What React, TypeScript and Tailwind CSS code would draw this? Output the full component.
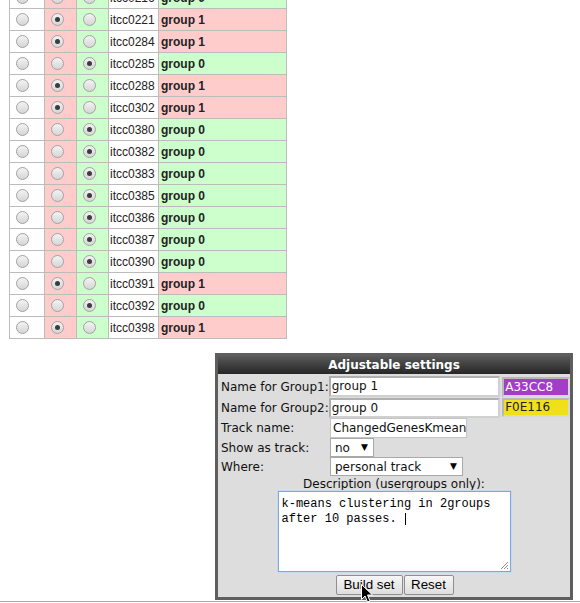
import React from "react";

type Row = { name: string; g: 0 | 1 };

const rows: Row[] = [
  { name: "itcc0216", g: 0 },
  { name: "itcc0221", g: 1 },
  { name: "itcc0284", g: 1 },
  { name: "itcc0285", g: 0 },
  { name: "itcc0288", g: 1 },
  { name: "itcc0302", g: 1 },
  { name: "itcc0380", g: 0 },
  { name: "itcc0382", g: 0 },
  { name: "itcc0383", g: 0 },
  { name: "itcc0385", g: 0 },
  { name: "itcc0386", g: 0 },
  { name: "itcc0387", g: 0 },
  { name: "itcc0390", g: 0 },
  { name: "itcc0391", g: 1 },
  { name: "itcc0392", g: 0 },
  { name: "itcc0398", g: 1 },
];

function Radio({ checked }: { checked?: boolean }) {
  return (
    <span className="flex w-[13px] h-[13px] rounded-full border border-[#a2a2a2] bg-linear-to-b from-[#f3f3f3] to-[#d6d6d6] items-center justify-center">
      {checked && <span className="block w-[5px] h-[5px] rounded-full bg-[#3c3c3c]" />}
    </span>
  );
}

const sans = "font-['DejaVu_Sans',Verdana,sans-serif]";
const arial = "font-['Liberation_Sans',Arial,sans-serif]";

export default function App() {
  return (
    <div className="relative w-[580px] h-[603px] overflow-hidden bg-white text-[#222]">
      <div className="ml-[9px] mt-[-14px]">
        <table className={`border-collapse ${arial} text-[12px]`}>
          <tbody>
            {rows.map((r) => (
              <tr key={r.name} className="h-[22px]">
                <td className="w-[35px] p-0 border border-[#bcbcbc] bg-white">
                  <div className="pl-[6px]"><Radio /></div>
                </td>
                <td className="w-[32px] p-0 border border-[#bcbcbc] bg-[#ffcccc]">
                  <div className="pl-[6px]"><Radio checked={r.g === 1} /></div>
                </td>
                <td className="w-[32px] p-0 border border-[#bcbcbc] bg-[#ccffcc]">
                  <div className="pl-[6px]"><Radio checked={r.g === 0} /></div>
                </td>
                <td className="w-[50px] p-0 pl-[1px] border border-[#bcbcbc] bg-white whitespace-nowrap">
                  {r.name}
                </td>
                <td
                  className={`w-[128px] p-0 pl-[2px] border border-[#bcbcbc] font-bold ${
                    r.g === 1 ? "bg-[#ffcccc]" : "bg-[#ccffcc]"
                  }`}
                >
                  group {r.g}
                </td>
              </tr>
            ))}
          </tbody>
        </table>
      </div>

      <div className="flex justify-end pr-[7px] mt-[14px]">
        <div className={`w-[358px] border-[3px] border-[#5e5e5e] bg-[#dddddd] ${sans} text-[12px] text-[#111]`}>
          <div className="h-[18px] bg-linear-to-b from-[#5a5a5a] to-[#262626] text-white font-bold text-center leading-[18px]">
            Adjustable settings
          </div>
          <div className="flex flex-col pt-[2px]">
            <div className="flex items-center h-[21px]">
              <div className="w-[111px] pl-[3px] whitespace-nowrap">Name for Group1:</div>
              <div className="w-[172px] h-[21px] bg-white border-2 border-t-[#b0b0b0] border-l-[#b0b0b0] border-b-[#d0d0d0] border-r-[#d0d0d0] pl-[1px] leading-[17px]">
                group 1
              </div>
              <div className="ml-[2px] w-[68px] h-[20px] bg-[#a33cc8] border-2 border-t-[#b8b8b8] border-l-[#b8b8b8] border-b-[#d8d8d8] border-r-[#d8d8d8] text-white pl-[1px] leading-[16px]">
                A33CC8
              </div>
            </div>
            <div className="flex items-center h-[21px]">
              <div className="w-[111px] pl-[3px] whitespace-nowrap">Name for Group2:</div>
              <div className="w-[172px] h-[20px] bg-white border-2 border-t-[#b0b0b0] border-l-[#b0b0b0] border-b-[#d0d0d0] border-r-[#d0d0d0] pl-[1px] leading-[16px]">
                group 0
              </div>
              <div className="ml-[2px] w-[68px] h-[19px] bg-[#f0e116] border-2 border-t-[#b8b8b8] border-l-[#b8b8b8] border-b-[#d8d8d8] border-r-[#d8d8d8] text-[#222] pl-[1px] leading-[15px]">
                F0E116
              </div>
            </div>
            <div className="flex items-center h-[20px]">
              <div className="w-[112px] pl-[3px] whitespace-nowrap">Track name:</div>
              <div className="w-[137px] h-[20px] bg-white border border-[#c4c4c4] pl-[2px] leading-[18px] overflow-hidden whitespace-nowrap">
                ChangedGenesKmeans
              </div>
            </div>
            <div className="flex items-center h-[19px]">
              <div className="w-[112px] pl-[3px] whitespace-nowrap">Show as track:</div>
              <div className="w-[44px] h-[19px] bg-white border border-[#a8a8a8] flex items-center pl-[4px] pr-[5px] justify-between">
                <span>no</span>
                <span className="text-[9px] text-black">▼</span>
              </div>
            </div>
            <div className="flex items-center h-[19px]">
              <div className="w-[112px] pl-[3px] whitespace-nowrap">Where:</div>
              <div className="w-[133px] h-[19px] bg-white border border-[#a8a8a8] flex items-center pl-[4px] pr-[5px] justify-between">
                <span>personal track</span>
                <span className="text-[9px] text-black">▼</span>
              </div>
            </div>
            <div className="text-center mt-[1px] h-[14px] leading-[14px]">Description (usergroups only):</div>
            <div className="flex justify-center mt-0">
              <div className="relative w-[233px] h-[81px] bg-white border border-[#7ea6dc] shadow-[0_0_0_1px_#c8d9f2] font-['Liberation_Mono','Courier_New',monospace] text-[12px] leading-[14.5px] text-black pl-[3px] pt-[5px]">
                <div className="whitespace-pre">k-means clustering in 2groups</div>
                <div className="whitespace-pre flex items-center">
                  after 10 passes.{" "}
                  <span className="inline-block w-[1px] h-[12px] bg-black ml-[1px]" />
                </div>
                <svg className="absolute right-[1px] bottom-[1px]" width="10" height="10" viewBox="0 0 10 10">
                  <path d="M9 2 L2 9 M9 5 L5 9 M9 8 L8 9" stroke="#8a8a8a" strokeWidth="1" />
                </svg>
              </div>
            </div>
            <div className={`flex justify-center mt-[3px] mb-[2px] ${arial} text-[13.333px]`}>
              <div className="ml-[1px] h-[20px] w-[67px] flex items-center justify-center rounded-[2px] border border-[#8f8f8f] bg-linear-to-b from-[#f6f6f6] to-[#dedede] text-black">
                Build set
              </div>
              <div className="ml-[1px] h-[20px] w-[50px] flex items-center justify-center rounded-[2px] border border-[#8f8f8f] bg-linear-to-b from-[#f6f6f6] to-[#dedede] text-black">
                Reset
              </div>
            </div>
          </div>
        </div>
      </div>

      <div className="absolute left-0 right-0 top-[601px] h-[1px] bg-[#a8a8a8]" />

      <svg className="absolute left-[361px] top-[584px]" width="13" height="20" viewBox="0 0 13 20">
        <path d="M0.5 0.5 L0.5 15.5 L4 12 L6.5 18 L9 17 L6.5 11 L11.5 11 Z" fill="black" stroke="white" strokeWidth="1" />
      </svg>
    </div>
  );
}
